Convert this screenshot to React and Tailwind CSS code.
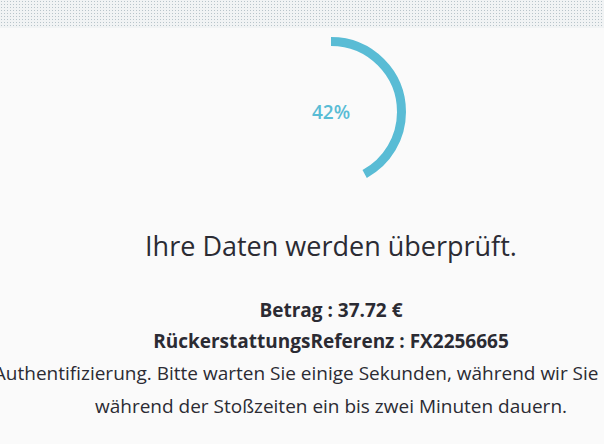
import React from "react";

const progress = 42;

const ProgressRing = ({ value }) => {
  const r = 70.5;
  const c = 2 * Math.PI * r;
  return (
    <div className="relative w-[160px] h-[160px]">
      <svg width="160" height="160" viewBox="0 0 160 160" className="-rotate-90">
        <circle
          cx="80"
          cy="80"
          r={r}
          fill="none"
          stroke="#59bcd5"
          strokeWidth="9"
          strokeDasharray={`${(c * value) / 100} ${c}`}
        />
      </svg>
      <div className="absolute inset-0 flex items-center justify-center text-[19px] font-semibold text-[#59bcd5]">
        {value}%
      </div>
    </div>
  );
};

export default function App() {
  return (
    <div className="w-[604px] h-[444px] overflow-hidden bg-[#fafafa] font-['Open_Sans',sans-serif] text-[#2b2b33]">
      {/* dithered strip at the top */}
      <div className="h-[28px] bg-[#f1f3f4] bg-[radial-gradient(#b8c4ca_0.8px,transparent_0.9px)] bg-[size:3px_3px]" />

      <div className="w-[662px] flex flex-col items-center text-center">
        <div className="mt-[4px]">
          <ProgressRing value={progress} />
        </div>

        <h1 className="mt-[36px] text-[27px] leading-[36px] font-normal">
          Ihre Daten werden überprüft.
        </h1>

        <div className="mt-[31px] text-[19px] font-bold leading-[31px]">
          <p>Betrag : 37.72 €</p>
          <p>RückerstattungsReferenz : FX2256665</p>
        </div>

        <div className="text-[19px] leading-[33px] whitespace-nowrap">
          <p>Authentifizierung. Bitte warten Sie einige Sekunden, während wir Sie prüfen.</p>
          <p>während der Stoßzeiten ein bis zwei Minuten dauern.</p>
        </div>
      </div>
    </div>
  );
}
